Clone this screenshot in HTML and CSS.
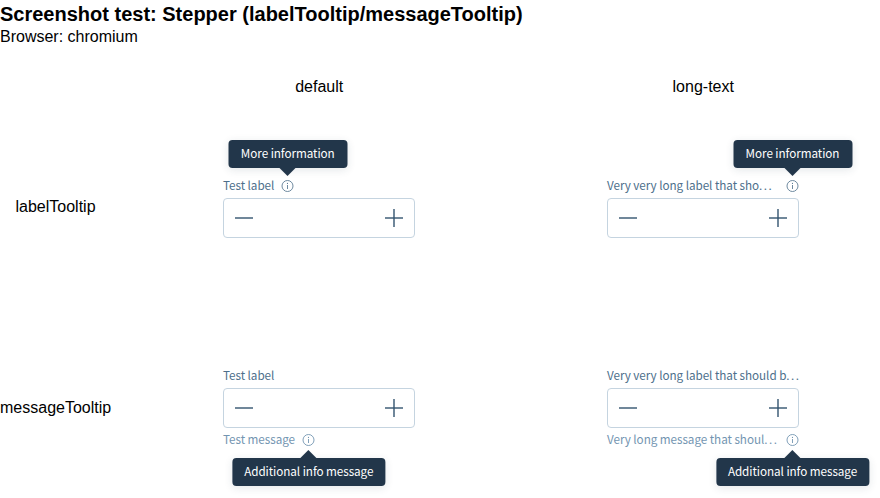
FILE: index.html
```html
<!DOCTYPE html>
<html lang="en">
<head>
<meta charset="utf-8">
<title>Stepper</title>
<link rel="stylesheet" href="styles.css">
</head>
<body>
<svg width="0" height="0" class="defs">
  <symbol id="info" viewBox="0 0 14 14"><circle cx="7" cy="7" r="5.5" fill="none" stroke="currentColor" stroke-width=".9"/><path d="M7 6V10" fill="none" stroke="currentColor" stroke-width=".9"/><circle cx="7" cy="4.4" r=".6" fill="currentColor"/></symbol>
  <symbol id="minus" viewBox="0 0 20 20"><path d="M1 10H19" stroke="currentColor" stroke-width="1.4"/></symbol>
  <symbol id="plus" viewBox="0 0 20 20"><path d="M1 10H19" stroke="currentColor" stroke-width="1.4"/><path d="M10 1V19" stroke="currentColor" stroke-width="1.4"/></symbol>
</svg>
<h1>Screenshot test: Stepper (labelTooltip/messageTooltip)</h1>
<p class="browser">Browser: chromium</p>
<div class="grid">
  <div></div><div class="col">default</div><div class="col">long-text</div>
  <div class="row">labelTooltip</div>
  <div class="cell">
    <div class="label"><span class="text">Test label</span><span class="info"><svg viewBox="0 0 13 14"><use href="#info" x="-.5" width="14" height="14"/></svg><span class="tip above">More information</span></span></div>
    <div class="stepper"><svg><use href="#minus"/></svg><svg><use href="#plus"/></svg></div>
  </div>
  <div class="cell">
    <div class="label fill"><span class="text">Very very long label that sho<span class="dots">...</span></span><span class="info"><svg viewBox="0 0 13 14"><use href="#info" x="-.5" width="14" height="14"/></svg><span class="tip above">More information</span></span></div>
    <div class="stepper"><svg><use href="#minus"/></svg><svg><use href="#plus"/></svg></div>
  </div>
  <div class="row second">messageTooltip</div>
  <div class="cell">
    <div class="label"><span class="text">Test label</span></div>
    <div class="stepper"><svg><use href="#minus"/></svg><svg><use href="#plus"/></svg></div>
    <div class="message"><span class="text">Test message</span><span class="info"><svg viewBox="0 0 13 14"><use href="#info" x="-.5" width="14" height="14"/></svg><span class="tip below">Additional info message</span></span></div>
  </div>
  <div class="cell">
    <div class="label"><span class="text">Very very long label that should b<span class="dots">...</span></span></div>
    <div class="stepper"><svg><use href="#minus"/></svg><svg><use href="#plus"/></svg></div>
    <div class="message fill"><span class="text">Very long message that shoul<span class="dots">...</span></span><span class="info"><svg viewBox="0 0 13 14"><use href="#info" x="-.5" width="14" height="14"/></svg><span class="tip below">Additional info message</span></span></div>
  </div>
</div>
</body>
</html>
```
FILE: styles.css
```css
* { box-sizing: border-box; }
body { margin: 0; height: 498px; overflow: hidden; background: #fff; color: #000; font: 16px/18px "Liberation Sans", Arial, sans-serif; }
.defs { display: none; }
h1 { margin: 0; padding-top: 3px; font-size: 20px; line-height: 23px; height: 28px; }
p { margin: 0; }
.browser { height: 18px; }
.grid { display: grid; grid-template-columns: 111px 384px 384px; grid-template-rows: 67px 190px 211px; padding-top: 7px; }
.col { text-align: center; padding: 25px 0 0 32.5px; }
.row { text-align: center; padding-top: 78px; }
.row.second { padding-top: 89px; }
.cell { width: 192px; margin-left: 112px; padding-top: 58px; font: 11.7px/16px "Noto Sans CJK SC", sans-serif; }
.label, .message { display: flex; height: 16px; color: #4d6f8b; }
.message { margin-top: 4px; color: #7395b1; }
.text { white-space: nowrap; line-height: 14px; letter-spacing: -.05px; }
.dots { letter-spacing: 1.5px; }
.info { position: relative; flex: none; width: 13px; height: 14px; margin: 1px 0 0 7px; color: #5f7d95; }
.message .info { margin-left: 7.3px; color: #7395b1; }
.fill { justify-content: space-between; }
.fill .info, .message.fill .info { margin-left: 0; }
.info svg { display: block; width: 13px; height: 14px; }
.stepper { display: flex; justify-content: space-between; align-items: center; height: 40px; margin-top: 4px; padding: 0 10px; border: 1px solid #c5d4e0; border-radius: 4px; color: #33536f; }
.stepper svg { width: 20px; height: 20px; }
.tip { position: absolute; left: 50%; transform: translateX(-50%); min-width: 119px; text-align: center; padding: 3px 12px 5px; height: 28px; line-height: 20px; background: #22364a; color: #fff; border-radius: 4px; white-space: nowrap; letter-spacing: -.06px; box-shadow: 0 2px 8px rgba(34, 54, 73, .12); }
.tip::after { content: ""; position: absolute; left: 50%; margin-left: -8px; border: 8px solid transparent; }
.above { bottom: 25px; }
.above::after { top: 28px; border-top-color: #22364a; border-bottom: 0; }
.below { top: 25px; }
.below::after { bottom: 28px; border-bottom-color: #22364a; border-top: 0; }
```
